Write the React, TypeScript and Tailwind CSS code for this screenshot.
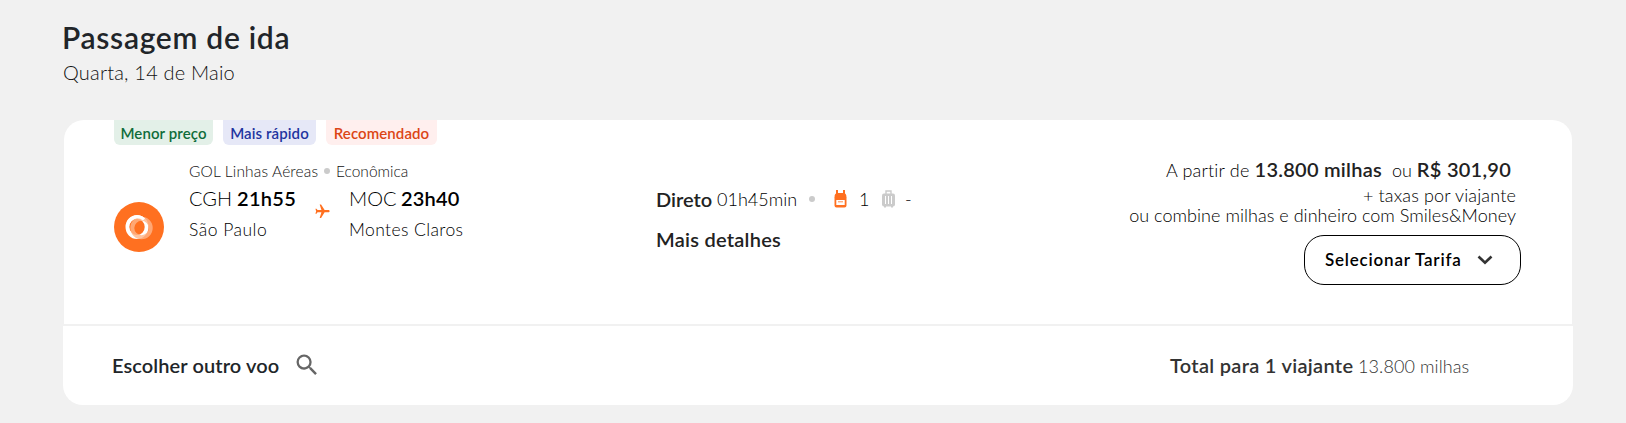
import React from "react";
import { MdFlight, MdSearch } from "react-icons/md";

function Dot({ className = "" }: { className?: string }) {
  return <span className={`h-1.5 w-1.5 rounded-full bg-[#cbcbcb] ${className}`} />;
}

function GolLogo() {
  return (
    <svg viewBox="0 0 50 50" className="h-[50px] w-[50px]">
      <circle cx="25" cy="25" r="25" fill="#ff7020" />
      <ellipse cx="23" cy="25" rx="9.600" ry="10" fill="none" stroke="#fff" strokeWidth="3.800" />
      <ellipse cx="27.500" cy="26" rx="9.200" ry="9.200" fill="none" stroke="#ffb58a" strokeOpacity="0.8" strokeWidth="4" />
      <path d="M30 17.500a9.600 10 0 1 0-13.500 14.500" fill="none" stroke="#fff" strokeWidth="3" />
    </svg>
  );
}

function BackpackIcon() {
  return (
    <svg viewBox="0 0 13 18" className="h-[18px] w-[13px]">
      <path
        d="M2 0h2v3h5V0h2v3.600c1 .7 1.400 1.600 1.400 2.900v1.500H.6V6.500C.6 5.200 1 4.300 2 3.600z"
        fill="#ff7020"
      />
      <path
        fillRule="evenodd"
        d="M.5 7.500h12v8a2 2 0 0 1-2 2h-8a2 2 0 0 1-2-2zM2.300 10v5h8.400v-5z"
        fill="#ff7020"
      />
      <path d="M4 11.800h5" stroke="#ff7020" strokeWidth="0.8" />
    </svg>
  );
}

function SuitcaseIcon() {
  return (
    <svg viewBox="0 0 13 18" className="h-[18px] w-[13px]">
      <path d="M4 4V1h5v3" fill="none" stroke="#cbcbcb" strokeWidth="1.4" />
      <rect x="0" y="3.500" width="13" height="13" rx="2" fill="#cbcbcb" />
      <path d="M2 16h2v1.500H2zM9 16h2v1.500H9z" fill="#cbcbcb" />
      <path d="M3.500 6v8M6.500 6v8M9.500 6v8" stroke="#fff" strokeWidth="1" />
    </svg>
  );
}

function Badges() {
  return (
    <div className="flex h-[25px] gap-2.5 pl-[50px] text-[15px] leading-[26px] font-semibold tracking-[0.1px]">
      <span className="w-[99px] rounded-b-md bg-[#e3f0e8] text-center text-[#0f6c3a]">
        Menor preço
      </span>
      <span className="w-[93px] rounded-b-md bg-[#e6e8f7] text-center text-[#1f35a0]">
        Mais rápido
      </span>
      <span className="w-[111px] rounded-b-md bg-[#ffefee] text-center text-[#dc4515]">
        Recomendado
      </span>
    </div>
  );
}

function Route() {
  return (
    <div className="flex w-[543px] pl-[50px]">
      <div className="pt-[57px]">
        <GolLogo />
      </div>
      <div className="pt-3.5 pl-[25px] leading-6">
        <div className="flex items-center text-[15.500px] tracking-[0.150px] text-[#111]">
          <span className="w-[135px]">GOL Linhas Aéreas</span>
          <Dot className="mr-[6px]" />
          <span className="tracking-normal">Econômica</span>
        </div>
        <div className="mt-[3px] flex">
          <div className="w-[125px]">
            <p className="flex text-xl leading-6 text-black">
              <span className="w-12">CGH</span>
              <b className="font-semibold tracking-[0.3px]">21h55</b>
            </p>
            <p className="mt-2 text-[17.500px] tracking-[0.5px] text-black">São Paulo</p>
          </div>
          <MdFlight className="mt-[17px] h-[17px] w-[17px] rotate-90 text-[#ff7020]" />
          <div className="pl-[18px]">
            <p className="flex text-xl leading-6 text-black">
              <span className="w-[52px]">MOC</span>
              <b className="font-semibold tracking-[0.2px]">23h40</b>
            </p>
            <p className="mt-2 text-[17.500px] tracking-[0.4px] text-black">Montes Claros</p>
          </div>
        </div>
      </div>
    </div>
  );
}

function Details() {
  return (
    <div className="w-[400px] pt-[42px] pl-[49px] text-black">
      <div className="flex h-6 items-center">
        <b className="w-[61px] text-xl leading-6 font-semibold text-[#222]">Direto</b>
        <span className="w-[92px] text-lg leading-6">01h45min</span>
        <Dot className="mr-[19px]" />
        <BackpackIcon />
        <span className="w-[35px] pl-3 text-lg leading-6">1</span>
        <SuitcaseIcon />
        <span className="pl-[10px] text-lg leading-6">-</span>
      </div>
      <button className="mt-4 block text-xl leading-6 font-semibold tracking-[0.250px] text-[#222]">
        Mais detalhes
      </button>
    </div>
  );
}

function Price() {
  return (
    <div className="flex flex-1 flex-col items-end pt-3 pr-14 text-black">
      <div className="flex items-baseline pr-[5px] text-lg leading-6">
        <span className="tracking-[0.2px]">A partir de</span>
        <b className="ml-[5px] text-xl leading-6 font-semibold tracking-[0.250px] text-[#222]">13.800 milhas</b>
        <span className="ml-2.5">ou</span>
        <b className="ml-[5px] text-xl leading-6 font-semibold tracking-[0.250px] text-[#222]">R$ 301,90</b>
      </div>
      <p className="mt-[3px] text-lg leading-5 tracking-[0.150px]">+ taxas por viajante</p>
      <p className="text-lg leading-5 tracking-[0.040px]">ou combine milhas e dinheiro com Smiles&amp;Money</p>
      <button className="mt-2.5 -mr-[5px] flex h-[50px] w-[217px] items-center rounded-[20px] border border-black pl-5 text-left text-[17px] font-semibold text-black">
        <span className="w-[152px] tracking-[0.8px]">Selecionar Tarifa</span>
        <svg viewBox="0 0 16 10" className="h-2.5 w-4">
          <path d="M1.500 1.500 8 7.800l6.500-6.300" fill="none" stroke="#333" strokeWidth="2.600" />
        </svg>
      </button>
    </div>
  );
}

function App() {
  return (
    <div className="h-[423px] w-[1626px] bg-[#f1f1f1] pt-[19px] pl-[63px] font-['Lato',sans-serif] font-light text-[#212529] [font-variant-ligatures:none]">
      <h1 className="-ml-px text-[30px] leading-9 font-semibold tracking-[0.7px]">Passagem de ida</h1>
      <p className="mt-[5px] text-xl leading-6 tracking-[0.2px] text-[#111]">Quarta, 14 de Maio</p>

      <div className="mt-9 w-[1510px]">
        <div className="mx-px h-[204px] overflow-hidden rounded-t-[20px] bg-white">
          <Badges />
          <div className="flex">
            <Route />
            <Details />
            <Price />
          </div>
        </div>
        {/* Footer */}
        <div className="mt-0.5 flex h-[79px] items-center rounded-b-[20px] bg-white pb-0.5 pl-[49px]">
          <span className="w-[181px] text-xl leading-6 font-semibold tracking-[0.1px]">Escolher outro voo</span>
          <MdSearch className="h-7 w-7 text-[#666]" />
          <div className="ml-auto flex w-[403px] items-baseline pt-0.5">
            <b className="w-[188px] text-xl leading-6 font-semibold tracking-[0.3px] text-[#333]">
              Total para 1 viajante
            </b>
            <span className="text-lg leading-6 tracking-[0.1px] text-[#333]">13.800 milhas</span>
          </div>
        </div>
      </div>
    </div>
  );
}

export default App;
